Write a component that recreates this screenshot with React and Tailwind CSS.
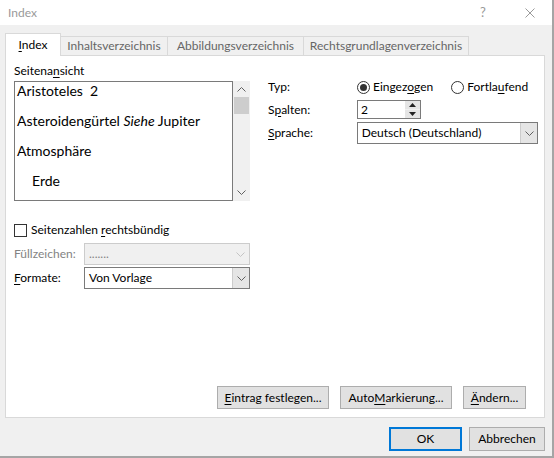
import React, { useState } from "react";

const ui = { fontFamily: "Lato, 'Noto Sans', sans-serif" };
const preview = { fontFamily: "Lato, 'Noto Sans', sans-serif" };

const U = ({ children }) => <span className="underline underline-offset-2">{children}</span>;

const Arrow = ({ disabled }) => (
  <svg width="9" height="5" viewBox="0 0 9 5">
    <path d="M0.5 0.5 L4.5 4.5 L8.5 0.5" fill="none" stroke={disabled ? "#c4c4c4" : "#606060"} strokeWidth="1" />
  </svg>
);

const Combo = ({ value, disabled, className }) => (
  <div
    className={`flex h-[22px] border ${disabled ? "border-[#cccccc] bg-[#f0f0f0] text-[#838383]" : "border-[#7a7a7a] bg-white text-black"} ${className}`}
  >
    <div className="flex-1 pl-[4px] flex items-center leading-none">{value}</div>
    <div className={`w-[17px] flex items-center justify-center ${disabled ? "bg-[#f0f0f0]" : "bg-[#e5e5e5] border-l border-[#cccccc]"}`}>
      <Arrow disabled={disabled} />
    </div>
  </div>
);

const Radio = ({ checked, label, onClick }) => (
  <button type="button" onClick={onClick} className="flex items-center gap-[3px] h-[16px]">
    <span className="w-[13px] h-[13px] rounded-full border border-[#333333] bg-white flex items-center justify-center">
      {checked && <span className="w-[7px] h-[7px] rounded-full bg-[#333333]" />}
    </span>
    <span>{label}</span>
  </button>
);

const Btn = ({ children, className, primary }) => (
  <button
    type="button"
    className={`h-[23px] bg-[#e1e1e1] flex items-center justify-center ${primary ? "border-2 border-[#0078d7]" : "border border-[#adadad]"} ${className}`}
  >
    {children}
  </button>
);

export default function App() {
  const [typ, setTyp] = useState("ein");
  const [checked, setChecked] = useState(false);

  return (
    <div style={ui} className="w-[554px] h-[458px] bg-[#f0f0f0] text-[12px] text-black border-r-2 border-b-2 border-[#a5a5a5] flex flex-col overflow-hidden">
      {/* title bar */}
      <div className="h-[25px] bg-white flex items-center shrink-0">
        <div className="pl-[8px] text-[#999999] text-[12px]">Index</div>
        <div className="ml-auto w-[12px] mr-[33px] text-[#999999] text-[13px]">?</div>
        <svg width="10" height="10" viewBox="0 0 10 10" className="mr-[17px]">
          <path d="M0.5 0.5 L9.5 9.5 M9.5 0.5 L0.5 9.5" stroke="#9a9a9a" strokeWidth="1" />
        </svg>
      </div>

      <div className="pl-[5px] pt-[8px]">
        {/* tabs */}
        <div className="flex items-end h-[22px]">
          <div className="relative z-10 -mb-px w-[56px] h-[23px] bg-white border border-b-0 border-[#d9d9d9] flex items-center justify-center pb-[1px]">
            <span><U>I</U>ndex</span>
          </div>
          <div className="w-[107px] h-[19px] border-t border-r border-[#d9d9d9] text-[#666666] flex items-center justify-center">Inhaltsverzeichnis</div>
          <div className="w-[136px] h-[19px] border-t border-r border-[#d9d9d9] text-[#666666] flex items-center justify-center">Abbildungsverzeichnis</div>
          <div className="w-[165px] h-[19px] border-t border-r border-[#d9d9d9] text-[#666666] flex items-center justify-center">Rechtsgrundlagenverzeichnis</div>
        </div>

        {/* panel */}
        <div className="w-[540px] h-[363px] bg-white border border-[#d9d9d9] flex flex-col">
          <div className="flex">
            {/* left column */}
            <div className="ml-[8px] w-[236px]">
              <div className="mt-[7px] h-[16px] leading-[16px]">Seitena<U>n</U>sicht</div>
              <div className="mt-[2px] flex h-[120px]">
                <div style={preview} className="w-[219px] border border-[#7a7a7a] pl-[2px] text-[14px] leading-[18px] flex flex-col gap-[12px] overflow-hidden">
                  <div>Aristoteles&nbsp; 2</div>
                  <div>Asteroidengürtel <i>Siehe</i> Jupiter</div>
                  <div>Atmosphäre</div>
                  <div className="pl-[15px]">Erde</div>
                </div>
                <div className="w-[17px] bg-[#f0f0f0] flex flex-col items-center">
                  <svg width="9" height="5" viewBox="0 0 9 5" className="mt-[6px]">
                    <path d="M0.5 4.5 L4.5 0.5 L8.5 4.5" fill="none" stroke="#606060" strokeWidth="1" />
                  </svg>
                  <div className="mt-[5px] w-[15px] h-[17px] bg-[#cdcdcd]" />
                  <svg width="9" height="5" viewBox="0 0 9 5" className="mt-auto mb-[6px]">
                    <path d="M0.5 0.5 L4.5 4.5 L8.5 0.5" fill="none" stroke="#606060" strokeWidth="1" />
                  </svg>
                </div>
              </div>
            </div>

            {/* right column */}
            <div className="ml-[18px] w-[270px]">
              <div className="mt-[23px] flex items-center h-[16px]">
                <div className="w-[89px]">Typ:</div>
                <Radio checked={typ === "ein"} onClick={() => setTyp("ein")} label={<>Einge<span>z</span><U>o</U>gen</>} />
                <div className="ml-[18px]">
                  <Radio checked={typ === "fort"} onClick={() => setTyp("fort")} label={<>Fortla<U>u</U>fend</>} />
                </div>
              </div>
              <div className="mt-[5px] flex items-center h-[19px]">
                <div className="w-[89px]">S<U>p</U>alten:</div>
                <div className="w-[64px] h-[19px] border border-[#7a7a7a] bg-white flex">
                  <div className="flex-1 pl-[3px] flex items-center">2</div>
                  <div className="w-[15px] flex flex-col">
                    <div className="flex-1 bg-[#e5e5e5] border-b border-[#f0f0f0] flex items-center justify-center">
                      <svg width="7" height="4" viewBox="0 0 7 4"><path d="M0 4 L3.5 0 L7 4 Z" fill="#222" /></svg>
                    </div>
                    <div className="flex-1 bg-[#e5e5e5] flex items-center justify-center">
                      <svg width="7" height="4" viewBox="0 0 7 4"><path d="M0 0 L3.5 4 L7 0 Z" fill="#222" /></svg>
                    </div>
                  </div>
                </div>
              </div>
              <div className="mt-[3px] flex items-center h-[22px]">
                <div className="w-[89px]"><U>S</U>prache:</div>
                <Combo value="Deutsch (Deutschland)" className="w-[182px]" />
              </div>
            </div>
          </div>

          {/* lower left */}
          <div className="ml-[8px] mt-[22px] w-[236px]">
            <button type="button" onClick={() => setChecked(!checked)} className="flex items-center h-[14px] gap-[4px]">
              <span className="w-[13px] h-[13px] border border-[#333333] bg-white flex items-center justify-center">
                {checked && <span className="text-[10px] leading-none">✓</span>}
              </span>
              <span>Seitenzahlen <U>r</U>echtsbündig</span>
            </button>
            <div className="mt-[6px] flex items-center h-[22px]">
              <div className="w-[70px] text-[#838383]">Füllzeichen:</div>
              <Combo value="......." disabled className="w-[166px]" />
            </div>
            <div className="mt-[2px] flex items-center h-[22px]">
              <div className="w-[70px]"><U>F</U>ormate:</div>
              <Combo value="Von Vorlage" className="w-[166px]" />
            </div>
          </div>

          {/* buttons */}
          <div className="mt-auto mb-[8px] mr-[18px] flex justify-end gap-[11px]">
            <Btn className="w-[112px]"><U>E</U>intrag festlegen...</Btn>
            <Btn className="w-[112px]">Auto<U>M</U>arkierung...</Btn>
            <Btn className="w-[63px]"><U>Ä</U>ndern...</Btn>
          </div>
        </div>

        {/* dialog buttons */}
        <div className="mt-[9px] mr-[8px] flex justify-end gap-[7px] w-[540px]">
          <Btn primary className="w-[73px] h-[24px]">OK</Btn>
          <Btn className="w-[76px] h-[24px]">Abbrechen</Btn>
        </div>
      </div>
    </div>
  );
}
